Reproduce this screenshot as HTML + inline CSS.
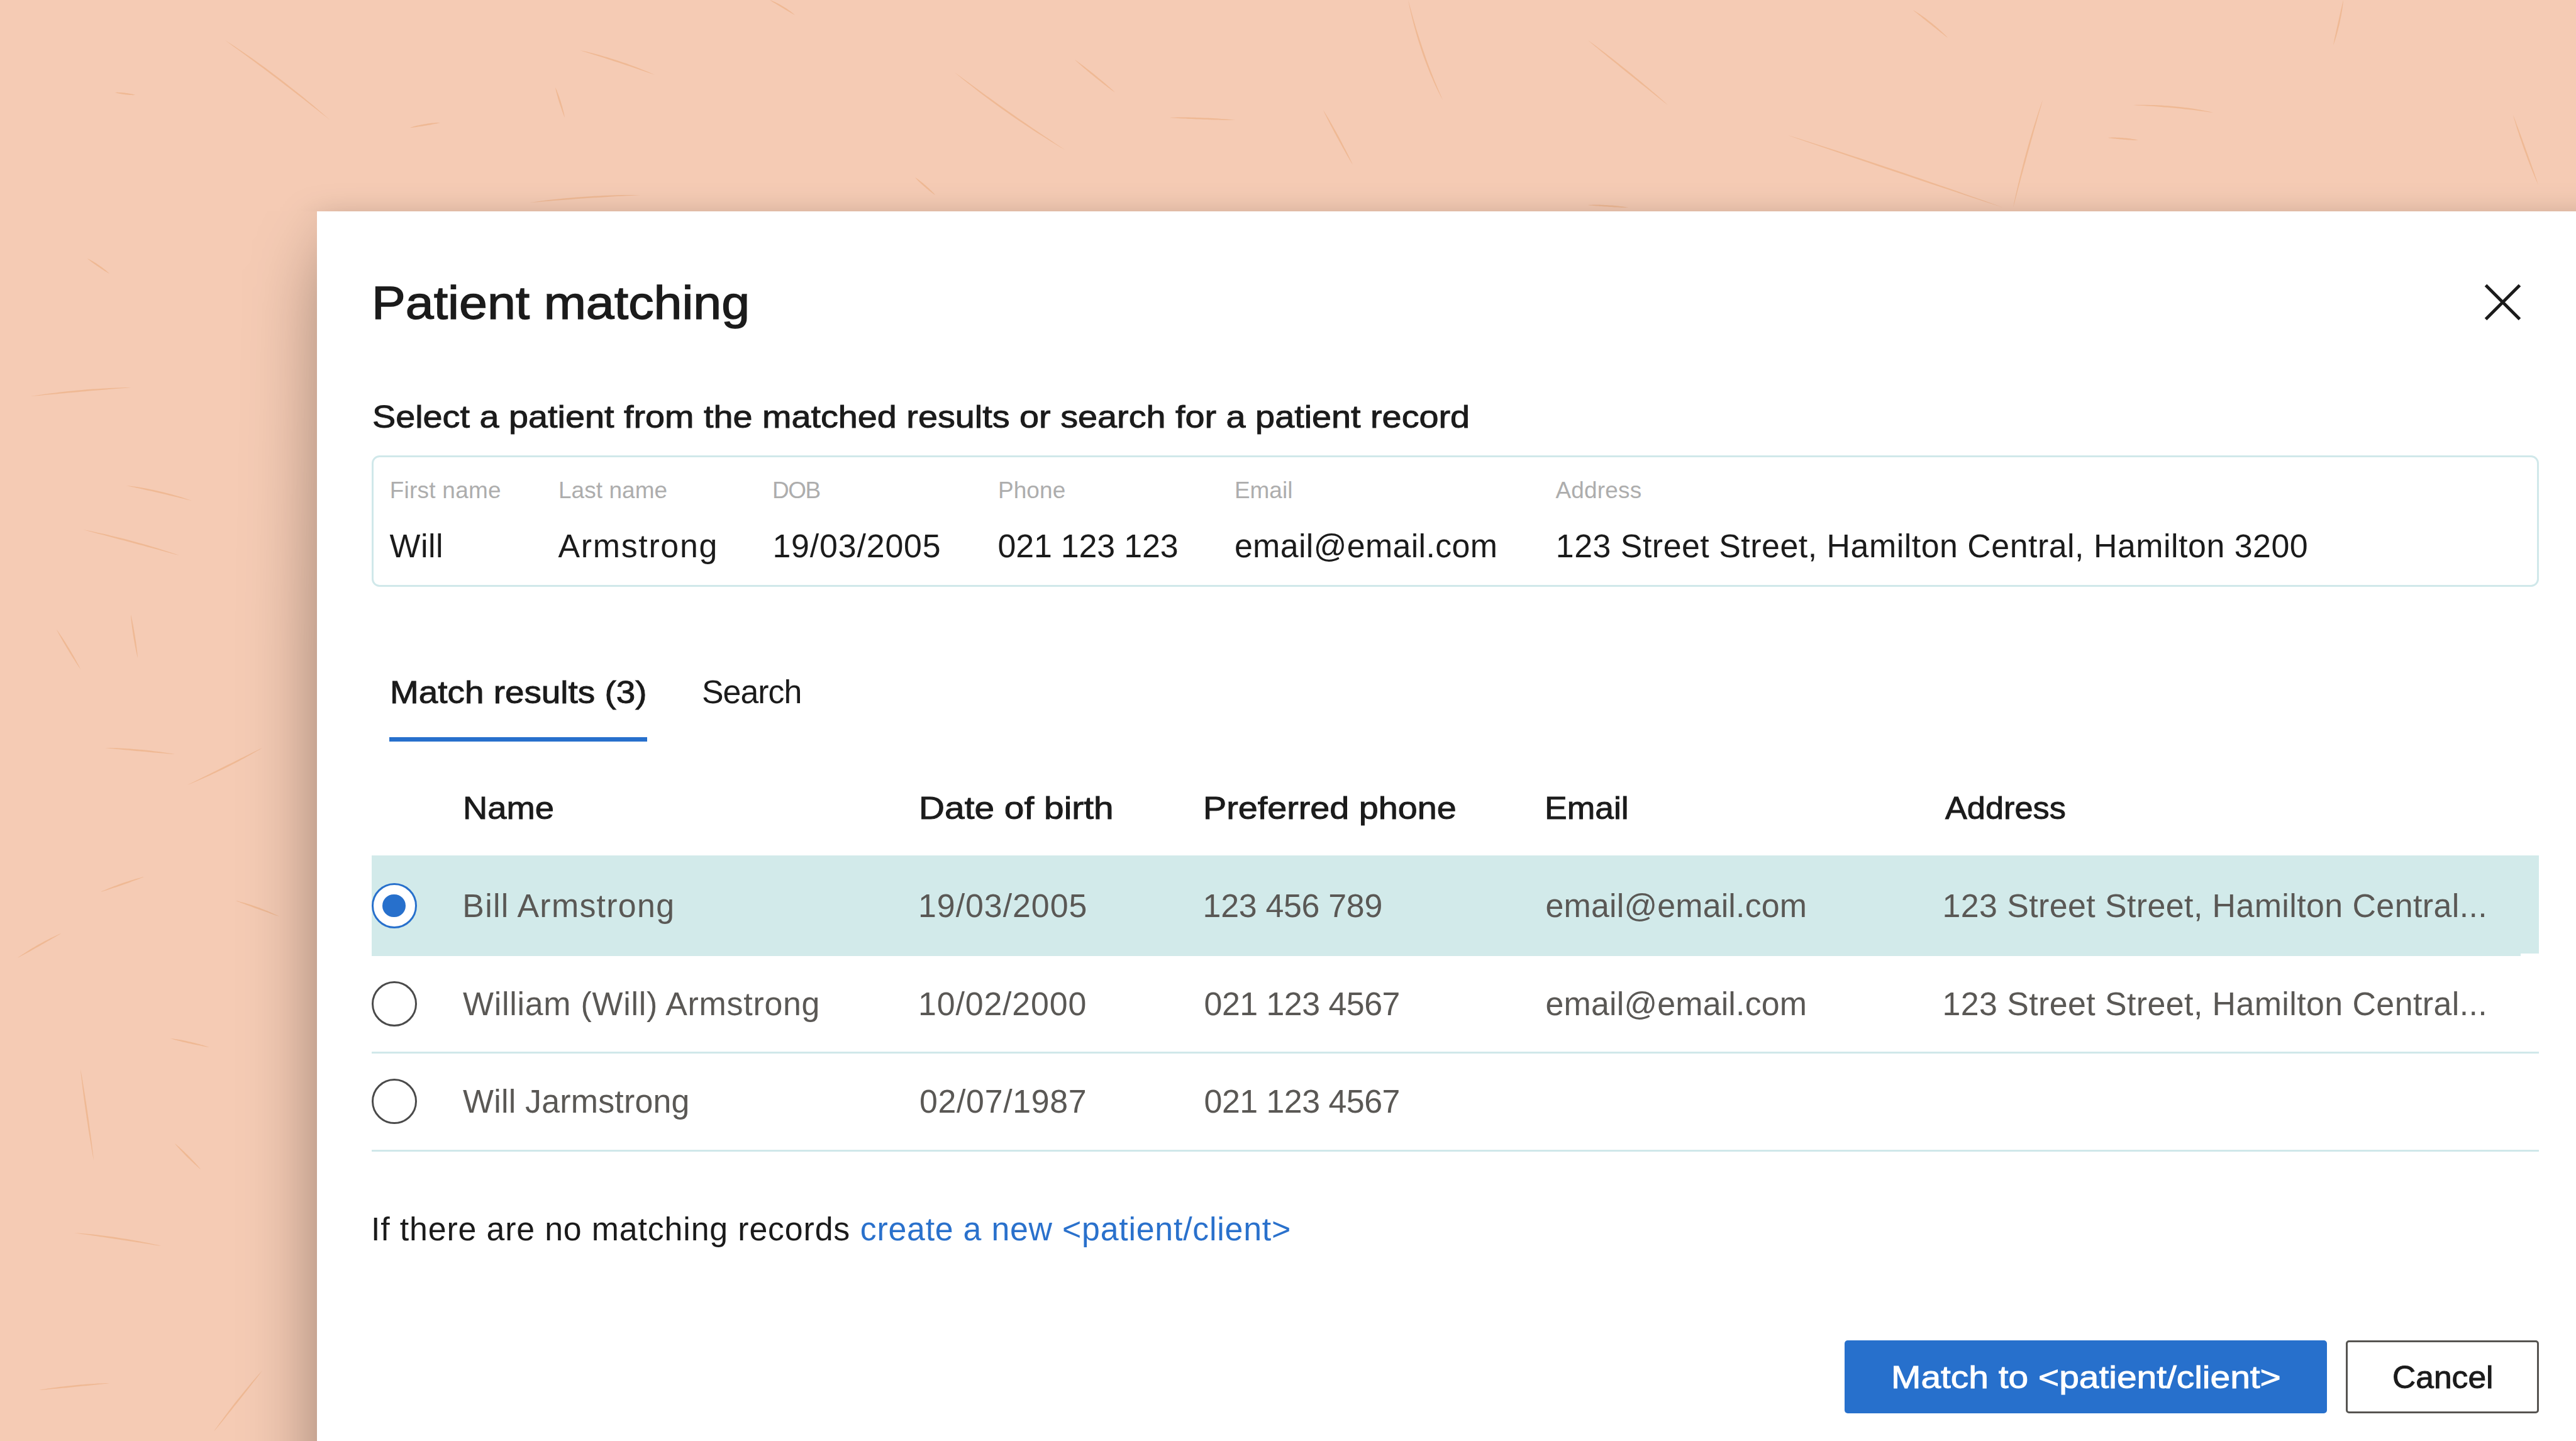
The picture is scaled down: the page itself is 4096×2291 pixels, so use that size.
<!DOCTYPE html>
<html><head><meta charset="utf-8"><style>
html,body{margin:0;padding:0}
body{width:4096px;height:2291px;overflow:hidden;position:relative;background:#f5cbb4;font-family:"Liberation Sans",sans-serif}
.t{position:absolute;white-space:nowrap;font-weight:400}
.b{font-weight:700}
.radio{position:absolute;left:590.5px;width:66px;height:66px;border:3px solid;border-radius:50%;background:#fff}
</style></head><body>
<svg style="position:absolute;left:0;top:0" width="4096" height="2291" fill="#e6a06a" fill-opacity="0.42"><polygon points="358.0,64.0 364.7,69.0 371.4,73.9 378.2,78.8 385.0,83.7 391.8,88.7 398.6,93.8 405.4,98.8 412.3,103.9 419.2,109.1 426.1,114.3 433.0,119.5 440.0,124.8 446.9,130.1 453.9,135.4 460.9,140.8 467.9,146.3 475.0,151.7 482.1,157.2 489.1,162.8 496.2,168.4 503.4,174.0 510.5,179.7 517.7,185.3 525.0,191.0 525.0,191.0 518.1,184.9 511.2,178.9 504.2,173.0 497.3,167.1 490.3,161.4 483.3,155.6 476.4,150.0 469.4,144.4 462.4,138.9 455.5,133.4 448.5,128.0 441.5,122.7 434.6,117.5 427.6,112.3 420.7,107.1 413.7,102.1 406.7,97.0 399.8,92.1 392.8,87.2 385.9,82.4 378.9,77.7 372.0,73.0 365.0,68.4 358.0,64.0"/><polygon points="183.0,147.0 184.3,147.5 185.6,147.8 186.9,148.2 188.2,148.5 189.6,148.7 190.9,149.0 192.2,149.3 193.5,149.5 194.8,149.7 196.2,149.9 197.5,150.1 198.8,150.3 200.2,150.4 201.5,150.6 202.8,150.7 204.2,150.8 205.5,150.9 206.9,151.0 208.2,151.1 209.6,151.1 210.9,151.2 212.3,151.2 213.6,151.1 215.0,151.0 215.0,151.0 213.7,150.5 212.4,150.2 211.1,149.8 209.8,149.5 208.4,149.3 207.1,149.0 205.8,148.7 204.5,148.5 203.2,148.3 201.8,148.1 200.5,147.9 199.2,147.7 197.8,147.6 196.5,147.4 195.2,147.3 193.8,147.2 192.5,147.1 191.1,147.0 189.8,146.9 188.4,146.9 187.1,146.8 185.7,146.8 184.4,146.9 183.0,147.0"/><polygon points="922.0,80.0 926.8,81.6 931.6,83.0 936.4,84.5 941.2,86.0 946.0,87.5 950.9,89.0 955.8,90.6 960.7,92.1 965.6,93.7 970.5,95.3 975.4,96.9 980.3,98.5 985.3,100.1 990.3,101.8 995.3,103.4 1000.3,105.1 1005.3,106.8 1010.3,108.5 1015.4,110.3 1020.5,112.0 1025.6,113.8 1030.7,115.5 1035.8,117.3 1041.0,119.0 1041.0,119.0 1036.0,116.7 1031.0,114.6 1026.0,112.5 1021.0,110.5 1016.0,108.5 1011.0,106.6 1006.0,104.7 1001.1,102.9 996.1,101.1 991.1,99.4 986.1,97.7 981.2,96.0 976.2,94.4 971.2,92.9 966.3,91.3 961.3,89.9 956.4,88.5 951.5,87.1 946.6,85.8 941.6,84.5 936.7,83.3 931.8,82.1 926.9,81.0 922.0,80.0"/><polygon points="652.0,203.0 654.1,202.9 656.1,202.7 658.1,202.4 660.2,202.2 662.2,201.9 664.2,201.6 666.2,201.3 668.2,201.0 670.2,200.7 672.2,200.4 674.2,200.1 676.2,199.8 678.2,199.4 680.2,199.1 682.2,198.7 684.2,198.4 686.2,198.0 688.1,197.6 690.1,197.2 692.1,196.8 694.1,196.4 696.1,196.0 698.0,195.6 700.0,195.0 700.0,195.0 698.0,194.9 695.9,195.0 693.9,195.1 691.9,195.3 689.9,195.4 687.9,195.6 685.8,195.8 683.8,196.1 681.8,196.3 679.8,196.6 677.8,196.9 675.8,197.2 673.8,197.6 671.8,197.9 669.8,198.3 667.8,198.7 665.8,199.2 663.8,199.6 661.8,200.1 659.8,200.6 657.9,201.1 655.9,201.7 653.9,202.3 652.0,203.0"/><polygon points="883.0,139.0 883.3,140.9 883.7,142.7 884.1,144.6 884.6,146.4 885.1,148.3 885.6,150.2 886.1,152.1 886.7,154.0 887.2,156.0 887.8,157.9 888.4,159.9 889.0,161.9 889.6,163.9 890.3,165.9 891.0,168.0 891.7,170.0 892.4,172.1 893.1,174.2 893.8,176.3 894.6,178.4 895.4,180.5 896.2,182.7 897.0,184.8 898.0,187.0 898.0,187.0 897.6,184.7 897.2,182.4 896.7,180.2 896.1,177.9 895.6,175.7 895.0,173.6 894.5,171.4 893.9,169.3 893.3,167.2 892.7,165.2 892.1,163.1 891.5,161.1 890.9,159.1 890.2,157.2 889.6,155.2 888.9,153.3 888.2,151.4 887.5,149.6 886.8,147.7 886.1,145.9 885.4,144.1 884.7,142.4 883.9,140.7 883.0,139.0"/><polygon points="1224.0,0.0 1225.5,1.1 1227.1,2.1 1228.7,3.2 1230.3,4.2 1231.9,5.1 1233.5,6.1 1235.1,7.1 1236.8,8.1 1238.4,9.1 1240.0,10.1 1241.7,11.1 1243.3,12.1 1245.0,13.1 1246.7,14.1 1248.3,15.1 1250.0,16.1 1251.7,17.1 1253.4,18.1 1255.2,19.1 1256.9,20.1 1258.6,21.1 1260.4,22.1 1262.2,23.1 1264.0,24.0 1264.0,24.0 1262.5,22.6 1261.0,21.3 1259.4,20.0 1257.8,18.8 1256.2,17.6 1254.6,16.4 1252.9,15.2 1251.3,14.1 1249.7,13.0 1248.0,11.9 1246.3,10.9 1244.7,9.9 1243.0,8.9 1241.3,7.9 1239.6,7.0 1237.9,6.1 1236.2,5.2 1234.5,4.4 1232.8,3.5 1231.0,2.7 1229.3,2.0 1227.6,1.2 1225.8,0.6 1224.0,0.0"/><polygon points="1518.0,115.0 1524.7,120.7 1531.4,126.2 1538.3,131.7 1545.2,137.1 1552.1,142.5 1559.1,147.9 1566.1,153.2 1573.2,158.5 1580.3,163.8 1587.5,169.0 1594.7,174.2 1602.0,179.3 1609.3,184.4 1616.7,189.5 1624.1,194.5 1631.6,199.5 1639.1,204.5 1646.6,209.4 1654.2,214.3 1661.9,219.1 1669.6,223.9 1677.3,228.7 1685.1,233.4 1693.0,238.0 1693.0,238.0 1685.4,232.9 1677.8,227.9 1670.3,222.8 1662.7,217.8 1655.2,212.8 1647.8,207.7 1640.3,202.7 1632.9,197.6 1625.5,192.5 1618.1,187.4 1610.8,182.3 1603.5,177.2 1596.2,172.1 1589.0,166.9 1581.8,161.8 1574.6,156.6 1567.4,151.4 1560.3,146.2 1553.2,141.0 1546.1,135.8 1539.1,130.6 1532.1,125.4 1525.0,120.2 1518.0,115.0"/><polygon points="1709.0,95.0 1711.4,97.3 1713.9,99.6 1716.4,101.8 1718.9,104.0 1721.4,106.2 1724.0,108.4 1726.6,110.6 1729.1,112.8 1731.8,115.0 1734.4,117.2 1737.0,119.3 1739.7,121.5 1742.4,123.7 1745.0,125.8 1747.8,128.0 1750.5,130.1 1753.2,132.3 1756.0,134.4 1758.8,136.5 1761.5,138.7 1764.4,140.8 1767.2,142.9 1770.1,145.0 1773.0,147.0 1773.0,147.0 1770.5,144.5 1767.8,142.1 1765.2,139.8 1762.6,137.4 1759.9,135.1 1757.3,132.8 1754.6,130.6 1752.0,128.3 1749.3,126.1 1746.6,123.9 1744.0,121.7 1741.3,119.5 1738.7,117.3 1736.0,115.2 1733.3,113.1 1730.6,111.0 1727.9,108.9 1725.3,106.8 1722.6,104.8 1719.9,102.8 1717.2,100.8 1714.5,98.8 1711.8,96.8 1709.0,95.0"/><polygon points="1860.0,187.0 1864.2,187.4 1868.3,187.7 1872.5,187.9 1876.8,188.2 1881.0,188.4 1885.2,188.6 1889.5,188.9 1893.7,189.1 1898.0,189.3 1902.3,189.4 1906.6,189.6 1911.0,189.8 1915.3,190.0 1919.6,190.1 1924.0,190.3 1928.4,190.4 1932.8,190.5 1937.2,190.6 1941.6,190.8 1946.1,190.9 1950.5,190.9 1955.0,191.0 1959.5,191.1 1964.0,191.0 1964.0,191.0 1959.5,190.4 1955.1,190.0 1950.6,189.6 1946.2,189.3 1941.7,188.9 1937.3,188.6 1932.9,188.3 1928.5,188.0 1924.1,187.8 1919.7,187.6 1915.4,187.4 1911.0,187.2 1906.7,187.0 1902.4,186.9 1898.1,186.8 1893.8,186.7 1889.5,186.6 1885.3,186.6 1881.0,186.6 1876.8,186.6 1872.6,186.6 1868.4,186.7 1864.2,186.8 1860.0,187.0"/><polygon points="843.0,322.0 850.3,321.5 857.6,320.9 864.8,320.3 872.1,319.7 879.4,319.1 886.7,318.5 893.9,317.9 901.2,317.4 908.5,316.9 915.8,316.3 923.1,315.8 930.3,315.3 937.6,314.8 944.9,314.3 952.2,313.9 959.5,313.4 966.8,313.0 974.1,312.5 981.4,312.1 988.7,311.7 996.0,311.3 1003.4,310.9 1010.7,310.5 1018.0,310.0 1018.0,310.0 1010.7,309.9 1003.3,309.9 996.0,310.0 988.7,310.1 981.3,310.3 974.0,310.5 966.7,310.7 959.4,311.0 952.1,311.4 944.8,311.8 937.5,312.2 930.2,312.7 922.9,313.2 915.6,313.8 908.3,314.4 901.0,315.1 893.7,315.7 886.5,316.5 879.2,317.3 871.9,318.1 864.7,319.0 857.5,319.9 850.2,320.9 843.0,322.0"/><polygon points="1455.0,282.0 1456.0,283.3 1457.2,284.6 1458.3,285.8 1459.5,287.0 1460.7,288.2 1462.0,289.4 1463.2,290.6 1464.4,291.8 1465.7,293.0 1467.0,294.1 1468.3,295.3 1469.6,296.5 1471.0,297.6 1472.3,298.8 1473.7,300.0 1475.1,301.1 1476.5,302.3 1478.0,303.4 1479.4,304.5 1480.9,305.7 1482.3,306.8 1483.8,307.9 1485.4,309.0 1487.0,310.0 1487.0,310.0 1485.8,308.5 1484.5,307.1 1483.2,305.8 1481.9,304.5 1480.6,303.1 1479.3,301.9 1478.0,300.6 1476.7,299.3 1475.3,298.1 1474.0,296.9 1472.7,295.7 1471.4,294.5 1470.0,293.4 1468.7,292.2 1467.3,291.1 1466.0,290.0 1464.6,288.9 1463.3,287.9 1461.9,286.8 1460.6,285.8 1459.2,284.8 1457.8,283.8 1456.5,282.9 1455.0,282.0"/><polygon points="2239.0,0.0 2240.5,7.5 2242.1,15.0 2243.8,22.3 2245.6,29.6 2247.4,36.8 2249.3,44.0 2251.3,51.0 2253.3,58.0 2255.4,64.9 2257.6,71.7 2259.8,78.5 2262.0,85.2 2264.3,91.8 2266.7,98.3 2269.2,104.7 2271.7,111.1 2274.2,117.4 2276.9,123.6 2279.6,129.7 2282.3,135.7 2285.1,141.7 2288.0,147.6 2290.9,153.3 2294.0,159.0 2294.0,159.0 2291.5,153.1 2288.9,147.1 2286.3,141.1 2283.8,135.1 2281.2,129.0 2278.8,122.8 2276.3,116.6 2273.9,110.2 2271.5,103.9 2269.1,97.4 2266.8,90.9 2264.5,84.3 2262.2,77.7 2260.0,71.0 2257.8,64.2 2255.6,57.3 2253.4,50.4 2251.3,43.4 2249.2,36.3 2247.1,29.2 2245.1,22.0 2243.1,14.7 2241.1,7.4 2239.0,0.0"/><polygon points="2525.0,64.0 2530.2,68.5 2535.5,72.9 2540.8,77.3 2546.1,81.7 2551.4,86.0 2556.7,90.4 2562.0,94.7 2567.3,99.0 2572.6,103.3 2577.8,107.7 2583.1,112.0 2588.4,116.3 2593.7,120.5 2599.0,124.8 2604.3,129.1 2609.6,133.4 2614.9,137.6 2620.2,141.8 2625.5,146.1 2630.7,150.3 2636.0,154.5 2641.3,158.7 2646.6,162.9 2652.0,167.0 2652.0,167.0 2647.0,162.4 2642.0,158.0 2636.9,153.5 2631.8,149.1 2626.6,144.7 2621.5,140.3 2616.3,135.9 2611.1,131.5 2605.9,127.2 2600.6,122.9 2595.4,118.5 2590.1,114.2 2584.8,110.0 2579.4,105.7 2574.1,101.4 2568.7,97.2 2563.4,93.0 2557.9,88.8 2552.5,84.6 2547.1,80.4 2541.6,76.2 2536.1,72.1 2530.6,68.0 2525.0,64.0"/><polygon points="2843.0,215.0 2856.8,219.9 2870.7,224.7 2884.7,229.5 2898.6,234.2 2912.6,239.0 2926.7,243.8 2940.7,248.6 2954.8,253.3 2969.0,258.1 2983.2,262.9 2997.4,267.7 3011.6,272.5 3025.9,277.3 3040.1,282.1 3054.5,286.9 3068.8,291.7 3083.2,296.5 3097.7,301.3 3112.1,306.1 3126.6,310.9 3141.2,315.7 3155.7,320.5 3170.3,325.3 3185.0,330.0 3185.0,330.0 3170.5,324.7 3156.1,319.6 3141.6,314.5 3127.1,309.4 3112.7,304.3 3098.3,299.3 3084.0,294.4 3069.6,289.4 3055.3,284.5 3041.0,279.7 3026.7,274.8 3012.4,270.0 2998.2,265.2 2984.0,260.5 2969.8,255.8 2955.6,251.1 2941.4,246.5 2927.3,241.8 2913.2,237.3 2899.1,232.7 2885.1,228.2 2871.0,223.7 2857.0,219.3 2843.0,215.0"/><polygon points="3248.0,159.0 3245.5,165.7 3243.2,172.4 3240.9,179.2 3238.7,186.0 3236.5,192.9 3234.3,199.8 3232.2,206.7 3230.1,213.7 3228.0,220.7 3226.0,227.7 3224.0,234.8 3222.0,241.9 3220.1,249.1 3218.1,256.2 3216.3,263.5 3214.4,270.7 3212.6,278.0 3210.8,285.3 3209.1,292.7 3207.4,300.1 3205.7,307.5 3204.0,314.9 3202.5,322.4 3201.0,330.0 3201.0,330.0 3203.1,322.6 3205.0,315.2 3207.0,307.8 3208.9,300.4 3210.9,293.1 3212.8,285.8 3214.7,278.5 3216.7,271.3 3218.6,264.1 3220.6,256.9 3222.5,249.7 3224.5,242.6 3226.5,235.5 3228.4,228.4 3230.4,221.4 3232.4,214.3 3234.3,207.3 3236.3,200.4 3238.3,193.4 3240.2,186.5 3242.2,179.6 3244.2,172.7 3246.1,165.9 3248.0,159.0"/><polygon points="3392.0,167.0 3397.6,167.4 3403.3,167.7 3408.8,168.1 3414.4,168.4 3419.9,168.8 3425.4,169.1 3430.8,169.5 3436.3,170.0 3441.6,170.4 3447.0,170.8 3452.3,171.3 3457.6,171.8 3462.9,172.3 3468.1,172.8 3473.3,173.4 3478.5,173.9 3483.7,174.5 3488.8,175.1 3493.9,175.8 3499.0,176.4 3504.0,177.1 3509.0,177.7 3514.0,178.4 3519.0,179.0 3519.0,179.0 3514.1,177.8 3509.2,176.7 3504.2,175.8 3499.2,174.8 3494.2,173.9 3489.1,173.1 3484.0,172.3 3478.8,171.6 3473.6,170.9 3468.4,170.3 3463.2,169.7 3457.9,169.2 3452.6,168.7 3447.2,168.3 3441.8,167.9 3436.4,167.6 3431.0,167.3 3425.5,167.1 3420.0,166.9 3414.4,166.8 3408.9,166.7 3403.3,166.7 3397.7,166.8 3392.0,167.0"/><polygon points="3352.0,219.0 3354.0,219.4 3356.0,219.7 3358.0,219.9 3360.0,220.2 3361.9,220.4 3363.9,220.6 3365.9,220.9 3367.9,221.1 3369.9,221.3 3371.9,221.4 3373.9,221.6 3375.9,221.8 3377.9,222.0 3379.9,222.1 3381.9,222.3 3383.9,222.4 3385.9,222.5 3387.9,222.6 3389.9,222.7 3391.9,222.9 3393.9,222.9 3395.9,223.0 3398.0,223.1 3400.0,223.0 3400.0,223.0 3398.0,222.4 3396.1,222.0 3394.1,221.6 3392.1,221.3 3390.1,220.9 3388.1,220.6 3386.1,220.3 3384.1,220.1 3382.1,219.8 3380.1,219.6 3378.1,219.4 3376.1,219.2 3374.1,219.0 3372.1,218.9 3370.1,218.8 3368.1,218.7 3366.1,218.7 3364.1,218.6 3362.1,218.6 3360.0,218.6 3358.0,218.6 3356.0,218.7 3354.0,218.8 3352.0,219.0"/><polygon points="3726.0,0.0 3725.2,2.9 3724.5,5.9 3723.8,8.9 3723.1,11.9 3722.4,14.8 3721.7,17.8 3721.1,20.8 3720.4,23.8 3719.7,26.7 3719.1,29.7 3718.4,32.7 3717.7,35.7 3717.1,38.7 3716.4,41.7 3715.7,44.7 3715.1,47.7 3714.4,50.7 3713.8,53.8 3713.1,56.8 3712.4,59.8 3711.8,62.8 3711.2,65.9 3710.5,68.9 3710.0,72.0 3710.0,72.0 3711.1,69.1 3712.1,66.1 3713.1,63.2 3714.0,60.2 3714.9,57.2 3715.7,54.2 3716.6,51.3 3717.4,48.3 3718.1,45.3 3718.9,42.3 3719.6,39.3 3720.3,36.3 3720.9,33.3 3721.5,30.3 3722.1,27.3 3722.7,24.2 3723.2,21.2 3723.8,18.2 3724.2,15.2 3724.7,12.1 3725.1,9.1 3725.5,6.1 3725.8,3.1 3726.0,0.0"/><polygon points="3996.0,183.0 3997.3,187.8 3998.7,192.6 4000.2,197.4 4001.6,202.2 4003.1,206.9 4004.7,211.6 4006.2,216.4 4007.8,221.1 4009.4,225.7 4011.0,230.4 4012.6,235.1 4014.3,239.7 4016.0,244.3 4017.7,248.9 4019.4,253.5 4021.1,258.1 4022.9,262.6 4024.7,267.2 4026.5,271.7 4028.3,276.2 4030.2,280.7 4032.0,285.2 4034.0,289.6 4036.0,294.0 4036.0,294.0 4034.5,289.4 4033.0,284.8 4031.4,280.2 4029.8,275.6 4028.2,271.0 4026.6,266.5 4025.0,261.9 4023.3,257.3 4021.7,252.7 4020.0,248.0 4018.4,243.4 4016.7,238.8 4015.1,234.2 4013.4,229.6 4011.7,224.9 4010.0,220.3 4008.3,215.6 4006.6,211.0 4004.9,206.3 4003.1,201.7 4001.4,197.0 3999.7,192.3 3997.9,187.6 3996.0,183.0"/><polygon points="2104.0,175.0 2105.6,178.5 2107.2,182.0 2109.0,185.4 2110.7,188.9 2112.5,192.4 2114.3,195.9 2116.1,199.5 2118.0,203.0 2119.8,206.6 2121.7,210.2 2123.7,213.8 2125.6,217.4 2127.6,221.0 2129.6,224.7 2131.6,228.3 2133.6,232.0 2135.7,235.7 2137.8,239.4 2139.9,243.2 2142.0,246.9 2144.2,250.7 2146.4,254.5 2148.6,258.2 2151.0,262.0 2151.0,262.0 2149.2,257.9 2147.3,254.0 2145.4,250.0 2143.5,246.2 2141.5,242.3 2139.6,238.5 2137.6,234.7 2135.7,230.9 2133.8,227.2 2131.8,223.4 2129.9,219.8 2127.9,216.1 2125.9,212.5 2124.0,208.9 2122.0,205.4 2120.0,201.9 2118.1,198.4 2116.1,194.9 2114.1,191.5 2112.1,188.1 2110.1,184.8 2108.1,181.5 2106.1,178.2 2104.0,175.0"/><polygon points="3042.0,16.0 3044.1,17.9 3046.4,19.8 3048.6,21.6 3050.8,23.4 3053.1,25.2 3055.3,27.1 3057.6,28.9 3059.8,30.7 3062.1,32.5 3064.4,34.4 3066.7,36.2 3068.9,38.0 3071.2,39.8 3073.5,41.7 3075.8,43.5 3078.1,45.3 3080.5,47.2 3082.8,49.0 3085.1,50.9 3087.5,52.7 3089.8,54.6 3092.2,56.4 3094.5,58.2 3097.0,60.0 3097.0,60.0 3095.0,57.8 3092.8,55.6 3090.7,53.6 3088.5,51.5 3086.3,49.5 3084.1,47.5 3081.9,45.5 3079.6,43.5 3077.4,41.6 3075.1,39.7 3072.9,37.8 3070.6,36.0 3068.3,34.2 3065.9,32.4 3063.6,30.6 3061.3,28.8 3058.9,27.1 3056.6,25.4 3054.2,23.8 3051.8,22.1 3049.4,20.5 3047.0,19.0 3044.5,17.4 3042.0,16.0"/><polygon points="2525.0,326.0 2527.7,326.4 2530.3,326.7 2533.0,326.9 2535.6,327.2 2538.3,327.4 2541.0,327.6 2543.6,327.9 2546.3,328.1 2548.9,328.3 2551.6,328.4 2554.3,328.6 2556.9,328.8 2559.6,329.0 2562.2,329.1 2564.9,329.3 2567.6,329.4 2570.3,329.5 2572.9,329.6 2575.6,329.8 2578.3,329.9 2580.9,329.9 2583.6,330.0 2586.3,330.1 2589.0,330.0 2589.0,330.0 2586.4,329.4 2583.7,329.0 2581.1,328.6 2578.4,328.3 2575.7,327.9 2573.1,327.6 2570.4,327.3 2567.8,327.0 2565.1,326.8 2562.4,326.6 2559.8,326.4 2557.1,326.2 2554.4,326.0 2551.7,325.9 2549.1,325.8 2546.4,325.7 2543.7,325.6 2541.0,325.6 2538.4,325.6 2535.7,325.6 2533.0,325.6 2530.4,325.7 2527.7,325.8 2525.0,326.0"/><polygon points="49.0,630.0 55.6,629.5 62.2,628.9 68.8,628.3 75.5,627.6 82.1,627.0 88.7,626.4 95.3,625.8 101.9,625.2 108.5,624.6 115.1,624.0 121.7,623.4 128.4,622.8 135.0,622.2 141.6,621.6 148.2,621.1 154.9,620.5 161.5,619.9 168.1,619.4 174.8,618.8 181.4,618.3 188.1,617.8 194.7,617.2 201.4,616.7 208.0,616.0 208.0,616.0 201.3,616.0 194.6,616.2 188.0,616.4 181.3,616.7 174.6,617.0 168.0,617.4 161.3,617.7 154.7,618.2 148.0,618.6 141.4,619.1 134.8,619.6 128.1,620.2 121.5,620.8 114.9,621.4 108.3,622.1 101.7,622.8 95.1,623.6 88.5,624.4 81.9,625.2 75.3,626.0 68.7,626.9 62.1,627.9 55.5,628.9 49.0,630.0"/><polygon points="201.0,772.0 205.0,773.0 209.1,773.9 213.2,774.8 217.4,775.7 221.5,776.6 225.7,777.5 229.9,778.4 234.1,779.4 238.3,780.3 242.6,781.3 246.9,782.3 251.2,783.3 255.5,784.3 259.9,785.3 264.3,786.3 268.7,787.4 273.2,788.4 277.6,789.5 282.1,790.6 286.6,791.7 291.2,792.8 295.7,793.9 300.3,795.0 305.0,796.0 305.0,796.0 300.5,794.4 296.0,792.9 291.5,791.5 287.0,790.1 282.6,788.8 278.1,787.5 273.7,786.3 269.3,785.1 264.9,783.9 260.5,782.8 256.1,781.8 251.8,780.7 247.5,779.8 243.1,778.8 238.9,777.9 234.6,777.1 230.3,776.3 226.1,775.5 221.9,774.8 217.6,774.1 213.5,773.5 209.3,772.9 205.1,772.4 201.0,772.0"/><polygon points="132.0,842.0 138.4,843.8 144.9,845.5 151.3,847.2 157.7,848.9 164.2,850.6 170.6,852.3 177.0,854.0 183.4,855.7 189.8,857.4 196.2,859.1 202.5,860.8 208.9,862.5 215.3,864.2 221.6,865.9 228.0,867.6 234.3,869.4 240.7,871.1 247.0,872.8 253.4,874.5 259.7,876.2 266.0,878.0 272.3,879.7 278.7,881.4 285.0,883.0 285.0,883.0 278.8,880.8 272.6,878.7 266.4,876.7 260.1,874.7 253.9,872.8 247.6,870.8 241.3,868.9 235.0,867.1 228.7,865.3 222.3,863.5 216.0,861.7 209.6,860.0 203.2,858.3 196.8,856.6 190.4,855.0 184.0,853.4 177.5,851.9 171.1,850.3 164.6,848.8 158.1,847.4 151.6,845.9 145.1,844.5 138.6,843.2 132.0,842.0"/><polygon points="208.0,977.0 208.1,979.8 208.3,982.6 208.6,985.4 208.9,988.2 209.2,991.0 209.6,993.8 209.9,996.7 210.3,999.5 210.7,1002.4 211.1,1005.2 211.5,1008.1 212.0,1011.0 212.4,1013.8 212.9,1016.7 213.4,1019.6 214.0,1022.5 214.5,1025.4 215.1,1028.4 215.6,1031.3 216.2,1034.2 216.9,1037.2 217.5,1040.1 218.2,1043.1 219.0,1046.0 219.0,1046.0 218.8,1043.0 218.5,1039.9 218.2,1036.9 217.8,1034.0 217.4,1031.0 217.1,1028.0 216.7,1025.1 216.3,1022.1 215.9,1019.2 215.4,1016.3 215.0,1013.4 214.5,1010.5 214.1,1007.7 213.6,1004.8 213.1,1002.0 212.6,999.2 212.1,996.3 211.6,993.5 211.0,990.7 210.5,988.0 209.9,985.2 209.3,982.4 208.7,979.7 208.0,977.0"/><polygon points="90.0,1001.0 91.2,1003.6 92.6,1006.1 94.0,1008.7 95.4,1011.2 96.8,1013.8 98.3,1016.3 99.7,1018.9 101.2,1021.5 102.7,1024.1 104.3,1026.7 105.8,1029.3 107.4,1031.9 109.0,1034.6 110.6,1037.2 112.2,1039.8 113.9,1042.5 115.6,1045.2 117.2,1047.8 119.0,1050.5 120.7,1053.2 122.5,1055.9 124.2,1058.6 126.1,1061.3 128.0,1064.0 128.0,1064.0 126.6,1061.0 125.1,1058.1 123.6,1055.2 122.1,1052.4 120.5,1049.6 119.0,1046.8 117.5,1044.0 115.9,1041.3 114.3,1038.6 112.8,1035.9 111.2,1033.2 109.6,1030.6 108.0,1028.0 106.4,1025.4 104.8,1022.8 103.2,1020.3 101.6,1017.8 100.0,1015.3 98.4,1012.8 96.7,1010.4 95.1,1008.0 93.4,1005.6 91.8,1003.3 90.0,1001.0"/><polygon points="167.0,1189.0 171.4,1189.6 175.8,1190.0 180.3,1190.5 184.8,1190.9 189.2,1191.3 193.7,1191.8 198.3,1192.2 202.8,1192.6 207.4,1193.0 211.9,1193.5 216.5,1193.9 221.1,1194.3 225.8,1194.7 230.4,1195.1 235.1,1195.5 239.8,1195.9 244.5,1196.4 249.2,1196.8 254.0,1197.2 258.7,1197.6 263.5,1198.0 268.3,1198.4 273.1,1198.7 278.0,1199.0 278.0,1199.0 273.2,1198.1 268.4,1197.4 263.7,1196.7 258.9,1196.0 254.1,1195.3 249.4,1194.7 244.7,1194.2 240.0,1193.6 235.3,1193.1 230.7,1192.6 226.0,1192.1 221.4,1191.7 216.7,1191.3 212.1,1190.9 207.6,1190.6 203.0,1190.3 198.4,1190.0 193.9,1189.7 189.4,1189.5 184.9,1189.3 180.4,1189.2 175.9,1189.0 171.4,1188.9 167.0,1189.0"/><polygon points="298.0,1248.0 303.3,1245.9 308.5,1243.8 313.7,1241.6 318.9,1239.3 324.0,1237.0 329.1,1234.7 334.2,1232.4 339.3,1230.1 344.3,1227.7 349.4,1225.3 354.4,1222.9 359.3,1220.4 364.3,1217.9 369.2,1215.4 374.1,1212.9 379.0,1210.4 383.8,1207.8 388.7,1205.2 393.5,1202.6 398.2,1200.0 403.0,1197.3 407.7,1194.6 412.4,1191.9 417.0,1189.0 417.0,1189.0 412.1,1191.3 407.2,1193.7 402.4,1196.1 397.5,1198.5 392.6,1201.0 387.7,1203.4 382.8,1205.8 377.9,1208.3 373.0,1210.7 368.1,1213.2 363.1,1215.6 358.2,1218.1 353.2,1220.5 348.2,1223.0 343.3,1225.5 338.3,1227.9 333.3,1230.4 328.3,1232.9 323.2,1235.4 318.2,1237.9 313.1,1240.4 308.1,1242.9 303.0,1245.4 298.0,1248.0"/><polygon points="139.0,411.0 140.2,412.2 141.6,413.3 142.9,414.3 144.3,415.4 145.6,416.4 147.0,417.5 148.4,418.5 149.8,419.5 151.2,420.6 152.6,421.6 154.1,422.6 155.5,423.6 157.0,424.6 158.5,425.6 159.9,426.5 161.4,427.5 163.0,428.5 164.5,429.5 166.0,430.4 167.6,431.4 169.1,432.3 170.7,433.3 172.3,434.2 174.0,435.0 174.0,435.0 172.7,433.7 171.3,432.4 169.9,431.2 168.5,430.1 167.1,428.9 165.6,427.8 164.2,426.7 162.8,425.6 161.3,424.5 159.9,423.5 158.4,422.4 157.0,421.4 155.5,420.4 154.1,419.5 152.6,418.5 151.1,417.6 149.6,416.7 148.1,415.8 146.6,414.9 145.1,414.1 143.6,413.2 142.1,412.4 140.6,411.7 139.0,411.0"/><polygon points="28.0,1523.0 30.8,1521.6 33.6,1520.1 36.4,1518.6 39.2,1517.0 42.0,1515.5 44.8,1513.9 47.7,1512.4 50.5,1510.8 53.3,1509.2 56.2,1507.6 59.0,1506.0 61.9,1504.4 64.8,1502.8 67.7,1501.1 70.5,1499.5 73.5,1497.8 76.4,1496.1 79.3,1494.5 82.2,1492.8 85.2,1491.1 88.1,1489.4 91.1,1487.6 94.1,1485.9 97.0,1484.0 97.0,1484.0 93.8,1485.3 90.6,1486.7 87.5,1488.2 84.4,1489.7 81.4,1491.1 78.3,1492.7 75.3,1494.2 72.3,1495.7 69.4,1497.3 66.4,1498.9 63.5,1500.5 60.6,1502.1 57.7,1503.8 54.9,1505.4 52.1,1507.1 49.3,1508.8 46.5,1510.5 43.8,1512.2 41.1,1513.9 38.4,1515.7 35.7,1517.4 33.1,1519.2 30.5,1521.1 28.0,1523.0"/><polygon points="160.0,1418.0 163.0,1417.2 166.0,1416.3 169.0,1415.4 171.9,1414.5 174.9,1413.5 177.8,1412.6 180.7,1411.6 183.6,1410.7 186.5,1409.7 189.4,1408.7 192.3,1407.7 195.2,1406.7 198.0,1405.7 200.9,1404.7 203.8,1403.7 206.6,1402.7 209.4,1401.6 212.3,1400.6 215.1,1399.5 217.9,1398.5 220.7,1397.4 223.5,1396.3 226.3,1395.2 229.0,1394.0 229.0,1394.0 226.1,1394.6 223.2,1395.4 220.3,1396.2 217.4,1397.0 214.5,1397.8 211.6,1398.7 208.7,1399.5 205.8,1400.4 203.0,1401.4 200.1,1402.3 197.2,1403.3 194.3,1404.3 191.4,1405.3 188.6,1406.3 185.7,1407.4 182.8,1408.4 180.0,1409.5 177.1,1410.7 174.2,1411.8 171.4,1413.0 168.5,1414.2 165.7,1415.4 162.8,1416.6 160.0,1418.0"/><polygon points="375.0,1432.0 377.8,1433.2 380.7,1434.3 383.5,1435.4 386.4,1436.5 389.2,1437.6 392.1,1438.7 395.0,1439.7 397.8,1440.8 400.7,1441.8 403.6,1442.9 406.4,1443.9 409.3,1445.0 412.2,1446.0 415.1,1447.0 417.9,1448.1 420.8,1449.1 423.7,1450.1 426.6,1451.1 429.5,1452.2 432.3,1453.2 435.2,1454.2 438.1,1455.2 441.0,1456.1 444.0,1457.0 444.0,1457.0 441.3,1455.5 438.5,1454.2 435.7,1452.9 432.9,1451.7 430.1,1450.4 427.3,1449.2 424.5,1448.1 421.6,1446.9 418.8,1445.8 415.9,1444.7 413.1,1443.6 410.2,1442.5 407.3,1441.5 404.4,1440.5 401.5,1439.5 398.6,1438.6 395.7,1437.6 392.8,1436.7 389.8,1435.8 386.9,1435.0 383.9,1434.2 381.0,1433.4 378.0,1432.6 375.0,1432.0"/><polygon points="271.0,1651.0 273.4,1651.8 275.8,1652.5 278.2,1653.2 280.6,1653.8 283.1,1654.5 285.5,1655.1 288.0,1655.8 290.5,1656.4 293.0,1657.0 295.6,1657.6 298.1,1658.2 300.7,1658.8 303.3,1659.3 305.9,1659.9 308.5,1660.5 311.2,1661.0 313.8,1661.6 316.5,1662.1 319.2,1662.6 321.9,1663.2 324.7,1663.7 327.4,1664.2 330.2,1664.6 333.0,1665.0 333.0,1665.0 330.3,1664.0 327.6,1663.2 325.0,1662.4 322.3,1661.6 319.6,1660.9 317.0,1660.1 314.3,1659.4 311.7,1658.7 309.1,1658.1 306.5,1657.4 303.9,1656.8 301.3,1656.2 298.7,1655.7 296.1,1655.1 293.6,1654.6 291.0,1654.1 288.5,1653.6 286.0,1653.1 283.5,1652.7 280.9,1652.3 278.5,1651.9 276.0,1651.5 273.5,1651.2 271.0,1651.0"/><polygon points="128.0,1700.0 128.5,1705.9 129.2,1711.8 129.9,1717.7 130.6,1723.6 131.3,1729.5 132.1,1735.5 132.8,1741.4 133.6,1747.4 134.4,1753.4 135.3,1759.4 136.1,1765.4 137.0,1771.4 137.8,1777.5 138.8,1783.6 139.7,1789.6 140.6,1795.7 141.6,1801.8 142.6,1808.0 143.6,1814.1 144.6,1820.3 145.6,1826.4 146.7,1832.6 147.8,1838.8 149.0,1845.0 149.0,1845.0 148.4,1838.7 147.7,1832.5 146.9,1826.2 146.2,1820.0 145.4,1813.8 144.6,1807.7 143.8,1801.5 142.9,1795.4 142.1,1789.3 141.3,1783.2 140.4,1777.1 139.5,1771.1 138.7,1765.0 137.8,1759.0 136.9,1753.0 135.9,1747.1 135.0,1741.1 134.1,1735.2 133.1,1729.3 132.2,1723.4 131.2,1717.5 130.2,1711.6 129.1,1705.8 128.0,1700.0"/><polygon points="278.0,1818.0 279.4,1819.9 281.0,1821.7 282.5,1823.5 284.1,1825.3 285.7,1827.0 287.3,1828.8 289.0,1830.5 290.6,1832.3 292.3,1834.0 293.9,1835.7 295.6,1837.5 297.3,1839.2 299.0,1840.9 300.8,1842.6 302.5,1844.3 304.3,1845.9 306.1,1847.6 307.8,1849.3 309.6,1850.9 311.5,1852.6 313.3,1854.2 315.2,1855.9 317.0,1857.5 319.0,1859.0 319.0,1859.0 317.5,1857.0 315.9,1855.2 314.2,1853.3 312.6,1851.5 310.9,1849.6 309.3,1847.8 307.6,1846.1 305.9,1844.3 304.3,1842.5 302.6,1840.8 300.9,1839.0 299.2,1837.3 297.5,1835.6 295.7,1833.9 294.0,1832.3 292.3,1830.6 290.5,1829.0 288.8,1827.3 287.0,1825.7 285.3,1824.1 283.5,1822.5 281.7,1821.0 279.9,1819.4 278.0,1818.0"/><polygon points="118.0,1960.0 124.0,1961.0 129.9,1961.9 135.8,1962.7 141.8,1963.6 147.7,1964.5 153.6,1965.3 159.4,1966.2 165.3,1967.1 171.1,1967.9 177.0,1968.8 182.8,1969.7 188.6,1970.5 194.3,1971.4 200.1,1972.3 205.9,1973.2 211.6,1974.0 217.3,1974.9 223.0,1975.8 228.7,1976.7 234.4,1977.6 240.1,1978.5 245.7,1979.4 251.3,1980.2 257.0,1981.0 257.0,1981.0 251.5,1979.6 245.9,1978.4 240.3,1977.2 234.7,1976.0 229.0,1974.9 223.4,1973.8 217.7,1972.8 212.0,1971.7 206.2,1970.7 200.5,1969.8 194.7,1968.9 188.9,1968.0 183.1,1967.1 177.3,1966.3 171.5,1965.5 165.6,1964.7 159.7,1964.0 153.8,1963.3 147.9,1962.6 142.0,1962.0 136.0,1961.4 130.0,1960.9 124.0,1960.4 118.0,1960.0"/><polygon points="62.0,2210.0 66.7,2209.7 71.4,2209.4 76.1,2209.0 80.8,2208.5 85.4,2208.1 90.1,2207.7 94.8,2207.3 99.5,2206.8 104.1,2206.4 108.8,2205.9 113.5,2205.5 118.1,2205.0 122.8,2204.6 127.5,2204.1 132.1,2203.6 136.8,2203.2 141.4,2202.7 146.1,2202.2 150.7,2201.7 155.4,2201.2 160.1,2200.7 164.7,2200.2 169.4,2199.7 174.0,2199.0 174.0,2199.0 169.3,2199.0 164.6,2199.2 159.9,2199.4 155.3,2199.6 150.6,2199.9 145.9,2200.2 141.2,2200.5 136.6,2200.8 131.9,2201.2 127.2,2201.6 122.5,2202.0 117.9,2202.5 113.2,2202.9 108.5,2203.4 103.9,2203.9 99.2,2204.5 94.5,2205.1 89.9,2205.7 85.2,2206.3 80.6,2207.0 75.9,2207.6 71.3,2208.4 66.6,2209.1 62.0,2210.0"/><polygon points="340.0,2276.0 343.4,2272.0 346.7,2268.0 350.0,2264.0 353.3,2259.9 356.6,2255.9 359.9,2251.8 363.1,2247.8 366.4,2243.7 369.6,2239.7 372.8,2235.6 376.1,2231.6 379.3,2227.6 382.5,2223.5 385.7,2219.5 388.8,2215.4 392.0,2211.4 395.2,2207.4 398.4,2203.3 401.5,2199.3 404.6,2195.3 407.8,2191.2 410.9,2187.2 414.0,2183.1 417.0,2179.0 417.0,2179.0 413.5,2182.7 410.1,2186.5 406.8,2190.4 403.4,2194.2 400.1,2198.1 396.8,2202.0 393.5,2206.0 390.2,2209.9 386.9,2213.9 383.7,2217.9 380.4,2221.9 377.2,2225.9 374.0,2230.0 370.8,2234.1 367.7,2238.2 364.5,2242.3 361.4,2246.4 358.3,2250.6 355.2,2254.7 352.1,2258.9 349.0,2263.1 345.9,2267.4 342.9,2271.6 340.0,2276.0"/></svg>
<svg style="position:absolute;left:0;top:0" width="4096" height="2291"><defs><filter id="sh" x="-50%" y="-50%" width="200%" height="200%"><feGaussianBlur stdDeviation="58"/></filter><filter id="sh2" x="-5%" y="-50%" width="110%" height="200%"><feGaussianBlur stdDeviation="30"/></filter></defs><clipPath id="cl"><rect x="0" y="336" width="504" height="1955"/></clipPath><g clip-path="url(#cl)"><polygon points="600,336 1000,336 1000,2700 502,2700 502,1030 514,430" fill="#000000" fill-opacity="0.36" filter="url(#sh)"/></g><clipPath id="cl2"><rect x="0" y="0" width="4096" height="336"/></clipPath><g clip-path="url(#cl2)"><rect x="500" y="357" width="3700" height="200" fill="#000000" fill-opacity="0.36" filter="url(#sh2)"/></g></svg>
<div style="position:absolute;left:504px;top:336px;width:3700px;height:2100px;background:#fff"></div>
<svg style="position:absolute;left:3940px;top:441px" width="80" height="80"><path d="M12.5 12.5 L66.5 66.5 M66.5 12.5 L12.5 66.5" stroke="#1b1b1b" stroke-width="5"/></svg>
<div style="position:absolute;left:590.5px;top:723.5px;width:3440.5px;height:203.5px;border:3px solid #d0e8ea;border-radius:12.5px"></div>
<div style="position:absolute;left:619px;top:1172px;width:410px;height:7px;background:#2770cc"></div>
<div style="position:absolute;left:591px;top:1360px;width:3446px;height:156px;background:#d2eaea"></div><div style="position:absolute;left:591px;top:1516px;width:3417px;height:4px;background:#d2eaea"></div>
<div style="position:absolute;left:591px;top:1672px;width:3446px;height:3px;background:#d0e8ea"></div>
<div style="position:absolute;left:591px;top:1828px;width:3446px;height:3px;background:#d0e8ea"></div>
<div class="radio" style="top:1404px;border-color:#2770cc"></div><div style="position:absolute;left:608.25px;top:1421.75px;width:36.5px;height:36.5px;border-radius:50%;background:#2770cc"></div><div class="radio" style="top:1559.5px;border-color:#4a4a4a"></div><div class="radio" style="top:1715px;border-color:#4a4a4a"></div>
<div style="position:absolute;left:2933px;top:2131px;width:767px;height:116px;border-radius:5px;background:#2770cc"></div>
<div style="position:absolute;left:3730px;top:2131px;width:301px;height:110px;border:3px solid #565451;border-radius:5px;background:#fff"></div>
<div class="t" style="left:591.0px;top:445.7px;font-size:73.2px;line-height:73.2px;transform:scaleX(1.1026);transform-origin:0 0;-webkit-text-stroke:1.391px currentColor;color:#1b1b1b">Patient matching</div><div class="t" style="left:591.5px;top:637.7px;font-size:50.78px;line-height:50.78px;transform:scaleX(1.0985);transform-origin:0 0;-webkit-text-stroke:0.965px currentColor;color:#1b1b1b">Select a patient from the matched results or search for a patient record</div><div class="t" style="left:619.8px;top:761.8px;font-size:36.96px;line-height:36.96px;letter-spacing:0.244px;color:#adadad">First name</div><div class="t" style="left:887.9px;top:761.8px;font-size:36.96px;line-height:36.96px;letter-spacing:0.087px;color:#adadad">Last name</div><div class="t" style="left:1227.9px;top:761.8px;font-size:36.96px;line-height:36.96px;letter-spacing:-1.45px;color:#adadad">DOB</div><div class="t" style="left:1586.9px;top:761.8px;font-size:36.96px;line-height:36.96px;letter-spacing:0.125px;color:#adadad">Phone</div><div class="t" style="left:1962.9px;top:761.8px;font-size:36.96px;line-height:36.96px;letter-spacing:0.025px;color:#adadad">Email</div><div class="t" style="left:2473.5px;top:761.8px;font-size:36.96px;line-height:36.96px;letter-spacing:0.183px;color:#adadad">Address</div><div class="t" style="left:619.4px;top:842.7px;font-size:51.88px;line-height:51.88px;letter-spacing:0.533px;color:#1b1b1b">Will</div><div class="t" style="left:887.5px;top:842.7px;font-size:51.88px;line-height:51.88px;letter-spacing:1.688px;color:#1b1b1b">Armstrong</div><div class="t" style="left:1228.4px;top:842.7px;font-size:51.88px;line-height:51.88px;letter-spacing:0.844px;color:#1b1b1b">19/03/2005</div><div class="t" style="left:1586.5px;top:842.7px;font-size:51.88px;line-height:51.88px;letter-spacing:-0.15px;color:#1b1b1b">021 123 123</div><div class="t" style="left:1962.9px;top:842.7px;font-size:51.88px;line-height:51.88px;letter-spacing:0.364px;color:#1b1b1b">email@email.com</div><div class="t" style="left:2473.8px;top:842.7px;font-size:51.88px;line-height:51.88px;letter-spacing:0.514px;color:#1b1b1b">123 Street Street, Hamilton Central, Hamilton 3200</div><div class="t" style="left:620.0px;top:1075.7px;font-size:50.49px;line-height:50.49px;transform:scaleX(1.0867);transform-origin:0 0;-webkit-text-stroke:0.959px currentColor;color:#1b1b1b">Match results (3)</div><div class="t" style="left:1116.0px;top:1074.7px;font-size:51.88px;line-height:51.88px;letter-spacing:-1.0px;color:#1b1b1b">Search</div><div class="t" style="left:735.8px;top:1260.1px;font-size:50.78px;line-height:50.78px;transform:scaleX(1.0708);transform-origin:0 0;-webkit-text-stroke:0.965px currentColor;color:#1b1b1b">Name</div><div class="t" style="left:1460.5px;top:1260.1px;font-size:50.78px;line-height:50.78px;transform:scaleX(1.1196);transform-origin:0 0;-webkit-text-stroke:0.965px currentColor;color:#1b1b1b">Date of birth</div><div class="t" style="left:1912.6px;top:1260.1px;font-size:50.78px;line-height:50.78px;transform:scaleX(1.0975);transform-origin:0 0;-webkit-text-stroke:0.965px currentColor;color:#1b1b1b">Preferred phone</div><div class="t" style="left:2455.6px;top:1260.1px;font-size:50.78px;line-height:50.78px;transform:scaleX(1.0533);transform-origin:0 0;-webkit-text-stroke:0.965px currentColor;color:#1b1b1b">Email</div><div class="t" style="left:3092.5px;top:1260.1px;font-size:50.78px;line-height:50.78px;transform:scaleX(1.0297);transform-origin:0 0;-webkit-text-stroke:0.965px currentColor;color:#1b1b1b">Address</div><div class="t" style="left:735.3px;top:1414.8px;font-size:51.88px;line-height:51.88px;letter-spacing:1.285px;color:#5a5855">Bill Armstrong</div><div class="t" style="left:1460.0px;top:1414.8px;font-size:51.88px;line-height:51.88px;letter-spacing:0.967px;color:#5a5855">19/03/2005</div><div class="t" style="left:1912.6px;top:1414.8px;font-size:51.88px;line-height:51.88px;letter-spacing:-0.28px;color:#5a5855">123 456 789</div><div class="t" style="left:2457.6px;top:1414.8px;font-size:51.88px;line-height:51.88px;letter-spacing:0.171px;color:#5a5855">email@email.com</div><div class="t" style="left:3088.5px;top:1414.8px;font-size:51.88px;line-height:51.88px;letter-spacing:0.424px;color:#5a5855">123 Street Street, Hamilton Central...</div><div class="t" style="left:736.0px;top:1570.5px;font-size:51.88px;line-height:51.88px;letter-spacing:0.739px;color:#5a5855">William (Will) Armstrong</div><div class="t" style="left:1460.0px;top:1570.5px;font-size:51.88px;line-height:51.88px;letter-spacing:0.856px;color:#5a5855">10/02/2000</div><div class="t" style="left:1914.6px;top:1570.5px;font-size:51.88px;line-height:51.88px;letter-spacing:-0.509px;color:#5a5855">021 123 4567</div><div class="t" style="left:2457.6px;top:1570.5px;font-size:51.88px;line-height:51.88px;letter-spacing:0.171px;color:#5a5855">email@email.com</div><div class="t" style="left:3088.5px;top:1570.5px;font-size:51.88px;line-height:51.88px;letter-spacing:0.424px;color:#5a5855">123 Street Street, Hamilton Central...</div><div class="t" style="left:736.0px;top:1726.2px;font-size:51.88px;line-height:51.88px;letter-spacing:0.214px;color:#5a5855">Will Jarmstrong</div><div class="t" style="left:1462.0px;top:1726.2px;font-size:51.88px;line-height:51.88px;letter-spacing:0.667px;color:#5a5855">02/07/1987</div><div class="t" style="left:1914.6px;top:1726.2px;font-size:51.88px;line-height:51.88px;letter-spacing:-0.509px;color:#5a5855">021 123 4567</div><div class="t" style="left:590.0px;top:1928.9px;font-size:51.88px;line-height:51.88px;letter-spacing:0.839px;color:#1b1b1b">If there are no matching records</div><div class="t" style="left:1367.7px;top:1928.9px;font-size:51.88px;line-height:51.88px;letter-spacing:0.761px;color:#2a71cc">create a new &lt;patient/client&gt;</div><div class="t" style="left:3007.0px;top:2165.3px;font-size:50.49px;line-height:50.49px;transform:scaleX(1.1268);transform-origin:0 0;-webkit-text-stroke:0.959px currentColor;color:#ffffff">Match to &lt;patient/client&gt;</div><div class="t" style="left:3803.7px;top:2165.3px;font-size:50.49px;line-height:50.49px;transform:scaleX(1.0217);transform-origin:0 0;-webkit-text-stroke:0.959px currentColor;color:#1b1b1b">Cancel</div>
</body></html>
